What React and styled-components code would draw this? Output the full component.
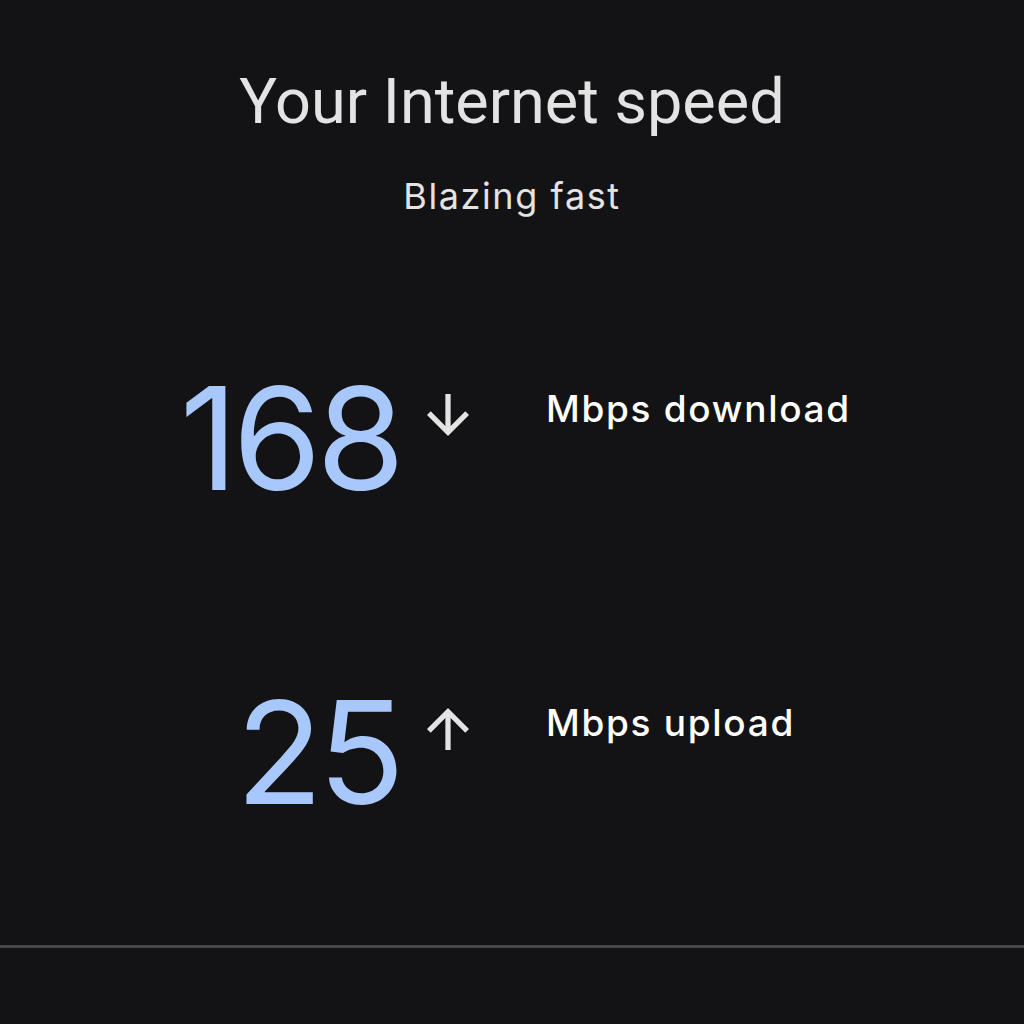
import styled, { createGlobalStyle } from 'styled-components';

const GlobalStyle = createGlobalStyle`
  html, body {
    margin: 0;
    padding: 0;
    background: #131315;
  }
  body {
    font-family: Inter, Roboto, sans-serif;
  }
`;

const Page = styled.div`
  width: 1024px;
  height: 1024px;
  background: #131315;
  display: flex;
  flex-direction: column;
  overflow: hidden;
`;

const Header = styled.div`
  display: flex;
  flex-direction: column;
  align-items: center;
  padding-top: 64px;
`;

const Title = styled.h1`
  margin: 0;
  font-family: Roboto, sans-serif;
  font-size: 63px;
  font-weight: 400;
  line-height: 76px;
  color: #e3e3e3;
`;

const Subtitle = styled.div`
  margin-top: 34px;
  font-family: Inter, sans-serif;
  font-size: 36px;
  font-weight: 400;
  line-height: 44px;
  letter-spacing: 1.6px;
  color: #e3e3e3;
`;

const Results = styled.div`
  display: flex;
  flex-direction: column;
  gap: 170px;
  padding-top: 148px;
  flex: 1;
`;

const Row = styled.div`
  display: grid;
  grid-template-columns: 400px 146px 1fr;
  align-items: start;
`;

const Value = styled.div`
  text-align: right;
  font-family: Inter, sans-serif;
  font-size: 143px;
  font-weight: 400;
  line-height: 144px;
  letter-spacing: -5px;
  color: #a8c7fa;
`;

const ArrowBox = styled.div`
  padding-left: 27px;
  padding-top: 28px;
  color: #e3e3e3;
  line-height: 0;
`;

const Label = styled.div`
  padding-top: 21px;
  font-family: Inter, sans-serif;
  font-size: 37px;
  font-weight: 500;
  line-height: 44px;
  letter-spacing: 1.7px;
  color: #ffffff;
`;

const Divider = styled.div`
  height: 3px;
  background: #464648;
  margin-bottom: 76px;
`;

function Arrow({ down }) {
  return (
    <svg width="42" height="42" viewBox="4 4 16 16" fill="currentColor">
      <path
        d="M20 12l-1.41-1.41L13 16.17V4h-2v12.17l-5.58-5.59L4 12l8 8 8-8z"
        transform={down ? undefined : 'rotate(180 12 12)'}
      />
    </svg>
  );
}

function SpeedRow({ value, down, label }) {
  return (
    <Row>
      <Value>{value}</Value>
      <ArrowBox>
        <Arrow down={down} />
      </ArrowBox>
      <Label>{label}</Label>
    </Row>
  );
}

export default function App() {
  return (
    <>
      <GlobalStyle />
      <Page>
        <Header>
          <Title>Your Internet speed</Title>
          <Subtitle>Blazing fast</Subtitle>
        </Header>
        <Results>
          <SpeedRow value="168" down label="Mbps download" />
          <SpeedRow value="25" label="Mbps upload" />
        </Results>
        <Divider />
      </Page>
    </>
  );
}
